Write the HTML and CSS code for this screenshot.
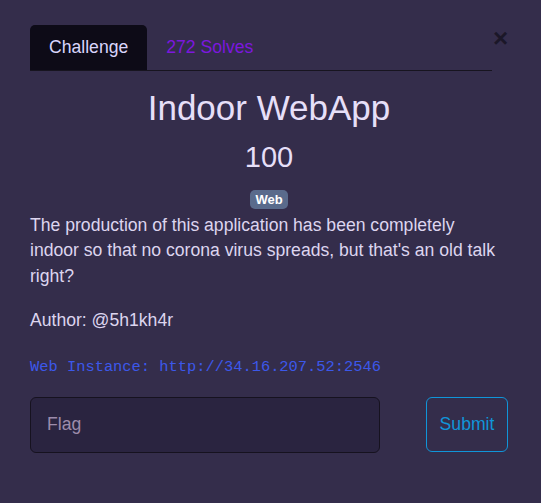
FILE: index.html
```html
<!DOCTYPE html>
<html lang="en">
<head>
<meta charset="utf-8">
<title>Indoor WebApp</title>
<link rel="stylesheet" href="styles.css">
</head>
<body>
<div class="modal">
  <div class="head">
    <ul class="tabs">
      <li class="tab active">Challenge</li>
      <li class="tab solves">272 Solves</li>
    </ul>
    <button class="close" type="button">&times;</button>
  </div>
  <h2 class="title">Indoor WebApp</h2>
  <h3 class="value">100</h3>
  <div class="tags"><span class="badge">Web</span></div>
  <div class="desc">
    <p class="text">The production of this application has been completely indoor so that no corona virus spreads, but that's an old talk right?</p>
    <p class="author">Author: @5h1kh4r</p>
    <p class="instance"><code>Web Instance: http://34.16.207.52:2546</code></p>
  </div>
  <form class="submit-row">
    <input class="flag" type="text" placeholder="Flag">
    <button class="submit" type="button">Submit</button>
  </form>
</div>
</body>
</html>
```
FILE: styles.css
```css
html, body {
  margin: 0;
  padding: 0;
  background: #342d4b;
  height: 100%;
}
body {
  font-family: "Liberation Sans", Arial, sans-serif;
  color: #e3dcf5;
}
.modal {
  padding: 25px 33px 0 30px;
}
.head {
  display: flex;
  align-items: flex-start;
}
.tabs {
  flex: 1;
  display: flex;
  list-style: none;
  margin: 0;
  padding: 0;
  border-bottom: 1px solid #17141f;
}
.tab {
  height: 45px;
  line-height: 45px;
  padding: 0 19px;
  font-size: 17.6px;
  border-radius: 5px 5px 0 0;
}
.tab.active {
  background: #0d0b17;
  color: #d9d5fb;
}
.tab.solves {
  color: #7c17de;
}
.close {
  width: 15px;
  margin-left: 1px;
  padding: 0;
  border: 0;
  background: transparent;
  font-family: "Liberation Sans", Arial, sans-serif;
  font-size: 26px;
  font-weight: 700;
  line-height: 1;
  color: #1b1728;
  text-align: center;
}
.title {
  margin: 16px 0 0;
  font-size: 35px;
  font-weight: 400;
  line-height: 1.2;
  text-align: center;
  color: #e6dff8;
}
.value {
  margin: 10.6px 0 0;
  font-size: 29px;
  font-weight: 400;
  line-height: 1.2;
  text-align: center;
  color: #e6dff8;
}
.tags {
  display: flex;
  justify-content: center;
  margin-top: 15.6px;
}
.badge {
  display: block;
  font-size: 13px;
  font-weight: 700;
  line-height: 1;
  padding: 3px 5px;
  border-radius: 5px;
  background: #5a6b8c;
  color: #ffffff;
}
.desc p {
  margin: 0;
  font-size: 17.6px;
  line-height: 25.6px;
  color: #ddd5ef;
}
.desc .text {
  margin-top: 3.8px;
}
.desc .author {
  margin-top: 18.2px;
}
.desc .instance {
  margin-top: 19.6px;
}
.instance code {
  font-family: "Liberation Mono", "Courier New", monospace;
  font-size: 15.4px;
  color: #3c58ea;
}
.submit-row {
  display: flex;
  justify-content: space-between;
  align-items: flex-start;
  margin-top: 16.4px;
}
.flag {
  box-sizing: border-box;
  width: 350px;
  height: 56px;
  padding: 0 16px;
  border: 1px solid #16121f;
  border-radius: 6px;
  background: #2a2440;
  color: #e3dcf5;
  font-family: "Liberation Sans", Arial, sans-serif;
  font-size: 17.6px;
  outline: none;
}
.flag::placeholder {
  color: #9d8cab;
}
.submit {
  box-sizing: border-box;
  width: 82px;
  height: 55px;
  padding: 0;
  border: 1px solid #1095d9;
  border-radius: 6px;
  background: transparent;
  color: #1095d9;
  font-family: "Liberation Sans", Arial, sans-serif;
  font-size: 17.6px;
}
```
